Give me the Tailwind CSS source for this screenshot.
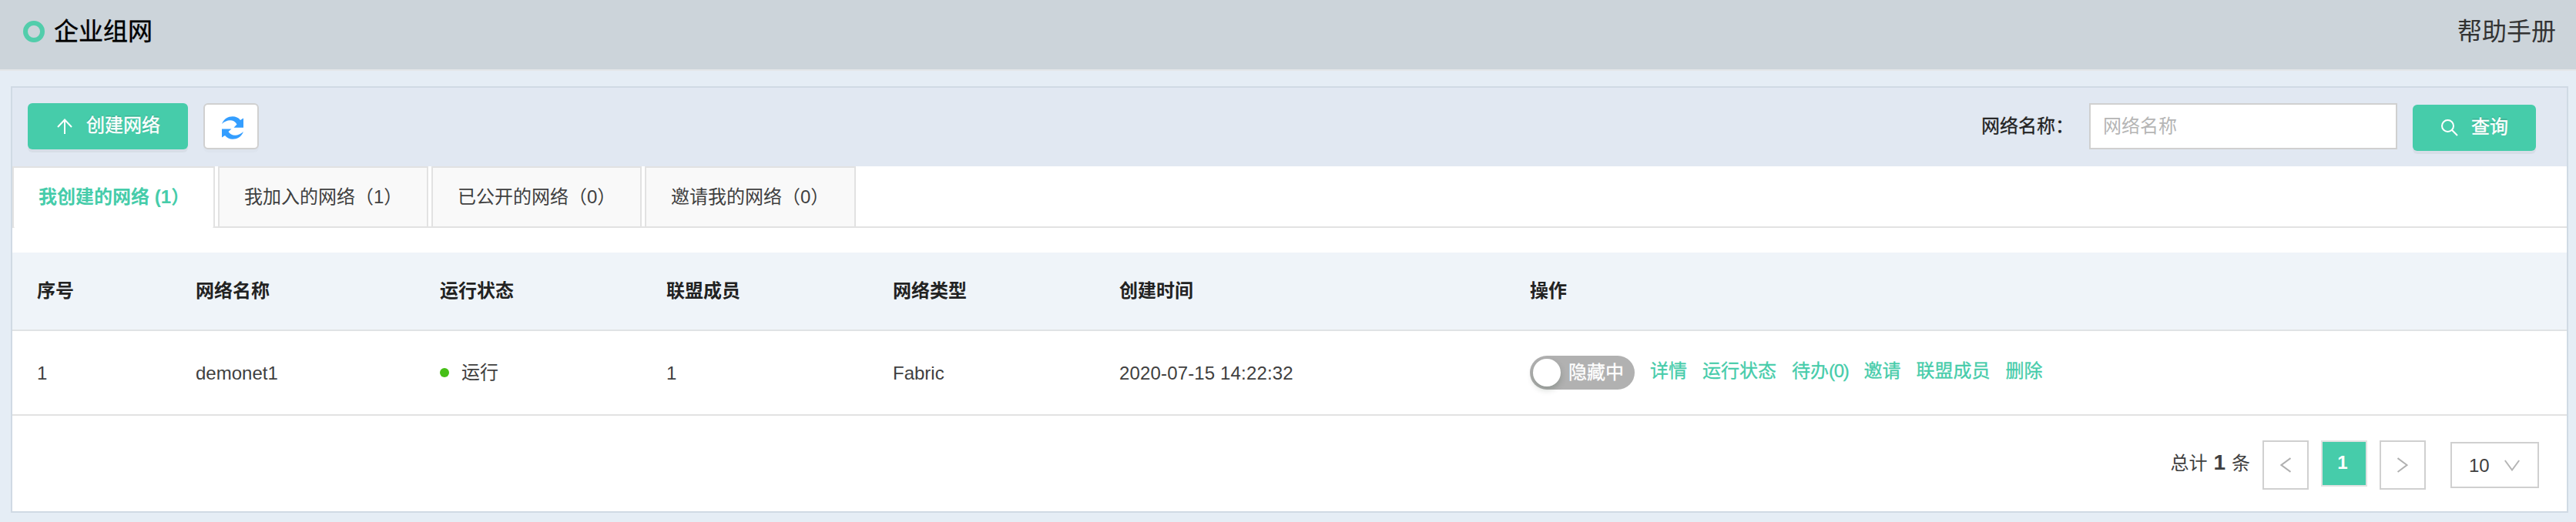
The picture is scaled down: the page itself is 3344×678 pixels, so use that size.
<!DOCTYPE html>
<html lang="zh-CN">
<head>
<meta charset="utf-8">
<title>企业组网</title>
<script src="https://cdn.jsdelivr.net/npm/@tailwindcss/browser@4"></script>
</head>
<body class="w-[3344px] h-[678px] overflow-hidden bg-[#e5edf5] font-['Liberation_Sans','Noto_Sans_CJK_SC',sans-serif] text-2xl leading-9 text-[#404040]">
<header class="flex h-[92px] items-start justify-between border-b-2 border-[#e4e6e8] bg-[#ccd4da] pl-[30px] pr-[26px] text-[32px] leading-[48px]">
  <div class="flex items-center gap-3 pt-4 text-black">
    <span class="size-7 rounded-full border-[6px] border-[#52cdab]"></span>
    <h1 class="pt-px [-webkit-text-stroke:0.4px_currentColor]">企业组网</h1>
  </div>
  <a class="pt-[17px] text-[#333]">帮助手册</a>
</header>

<main class="ml-[14px] mt-5 h-[554px] w-[3320px] border-2 border-[#d0dae4] bg-white">
  <div class="flex h-[102px] items-start justify-between bg-[#e1e8f2] pl-5 pr-10 pt-5">
    <div class="flex gap-5">
      <button class="flex h-[60px] w-[208px] items-center rounded-md bg-[#46ccaa] pl-[38px] text-white shadow-[0_4px_0_rgba(0,0,0,0.045)] [text-shadow:0_-2px_0_rgba(0,0,0,0.12)]">
        <svg class="mr-[18px] h-5 w-5" viewBox="0 0 20 20" fill="none" stroke="currentColor" stroke-width="2"><path d="M10 20V2M1 11L10 1.5L19 11"/></svg>
        <span class="-mt-0.5 [-webkit-text-stroke:0.4px_currentColor]">创建网络</span>
      </button>
      <button class="flex h-[60px] w-[72px] items-center justify-center rounded-md border-2 border-[#d0d0d0] bg-white pl-1 pt-[3px] shadow-[0_4px_0_rgba(0,0,0,0.015)]">
        <svg class="h-[30px] w-7" viewBox="0 0 28 30" fill="#349eff"><path d="M0 10C3 3 8 .3 14 .3C18 .3 21.500 1.800 24 5L28 2.500V14.800H15.500L19.500 10.500C16 4 7 3.500 0 10Z"/><path d="M28 20C25 27 20 29.700 14 29.700C10 29.700 6.500 28.200 4 25L0 27.500V16.500H12.500L8.500 20C12 26 21 26.500 28 20Z"/></svg>
      </button>
    </div>
    <div class="flex items-start">
      <label class="mt-3 flex w-[140px] text-[#222] [-webkit-text-stroke:0.3px_currentColor]">网络名称<span>：</span></label>
      <div class="h-[60px] w-[400px] border-2 border-[#d0d0d0] bg-white pl-4 pt-2.5 text-[#b5b5b5]">网络名称</div>
      <button class="ml-5 mt-0.5 flex h-[60px] w-40 items-center rounded-md bg-[#46ccaa] pl-[37px] text-white shadow-[0_4px_0_rgba(0,0,0,0.045)] [text-shadow:0_-2px_0_rgba(0,0,0,0.12)]">
        <svg class="mr-[17px] h-[22px] w-[22px]" viewBox="0 0 22 22" fill="none" stroke="currentColor" stroke-width="2"><circle cx="8.500" cy="8.500" r="7.500"/><path d="M13.800 13.800L21 21"/></svg>
        <span class="-mt-0.5 [-webkit-text-stroke:0.4px_currentColor]">查询</span>
      </button>
    </div>
  </div>

  <nav class="flex h-20 gap-1 border-b-2 border-[#e2e2e2] leading-9">
    <a class="h-20 w-[263px] whitespace-nowrap rounded-b-[3px] border-x-2 border-t-2 border-[#e2e2e2] bg-white pl-8 pt-5 font-bold text-[#46ccaa]">我创建的网络 (1）</a>
    <a class="w-[273px] whitespace-nowrap border-x-2 border-t-2 border-[#e2e2e2] bg-[#f9f9f9] pl-8 pt-5">我加入的网络（1）</a>
    <a class="w-[273px] whitespace-nowrap border-x-2 border-t-2 border-[#e2e2e2] bg-[#f9f9f9] pl-8 pt-5">已公开的网络（0）</a>
    <a class="w-[274px] whitespace-nowrap border-x-2 border-t-2 border-[#e2e2e2] bg-[#f9f9f9] pl-8 pt-5">邀请我的网络（0）</a>
  </nav>

  <section class="mt-8">
    <div class="grid h-[102px] grid-cols-[206px_317px_294px_294px_294px_533px_1fr] items-center border-b-2 border-[#e0e3e5] bg-[#eff4f9] pl-8 font-bold text-[#222]">
      <span>序号</span><span>网络名称</span><span>运行状态</span><span>联盟成员</span><span>网络类型</span><span>创建时间</span><span>操作</span>
    </div>
    <div class="grid h-[110px] grid-cols-[206px_317px_294px_294px_294px_533px_1fr] items-center border-b-2 border-[#e2e2e2] pl-8">
      <span class="pt-0.5">1</span>
      <span class="pt-0.5">demonet1</span>
      <span class="flex items-center gap-4"><i class="size-3 rounded-full bg-[#46bf17]"></i>运行</span>
      <span class="pt-0.5">1</span>
      <span class="pt-0.5">Fabric</span>
      <span class="pt-0.5 tracking-[0.15px]">2020-07-15 14:22:32</span>
      <div class="flex items-center">
        <div class="mr-5 flex h-11 w-[136px] items-center rounded-full bg-[#b1b1b1] pl-1 text-white">
          <span class="mr-2.5 size-9 rounded-full bg-white shadow-[0_4px_8px_rgba(0,35,11,0.2)]"></span>
          <span class="[-webkit-text-stroke:0.3px_currentColor]">隐藏中</span>
        </div>
        <div class="-mt-1 flex gap-5 text-[#46ccaa] [-webkit-text-stroke:0.3px_currentColor]">
          <a>详情</a><a>运行状态</a><a>待办<span class="tracking-[-1.3px]">(0)</span></a><a>邀请</a><a>联盟成员</a><a>删除</a>
        </div>
      </div>
    </div>
  </section>

  <footer class="flex items-start justify-end pr-9 pt-8">
    <div class="mr-4 mt-[11px] flex items-baseline gap-2"><span>总计</span><b class="text-[28px] leading-9">1</b><span>条</span></div>
    <button class="mr-4 flex h-16 w-[60px] items-center justify-center border-2 border-[#d0d0d0] text-[#b0b0b0]">
      <svg class="h-5 w-[14px]" viewBox="0 0 14 20" fill="none" stroke="currentColor" stroke-width="2"><path d="M13.500 1L1.500 10L13.500 19"/></svg>
    </button>
    <button class="mr-4 h-[60px] w-[60px] border-2 border-[#e2e2e2] bg-[#46ccaa] pb-0.5 pr-1 font-bold leading-[54px] text-white">1</button>
    <button class="mr-8 flex h-16 w-[60px] items-center justify-center border-2 border-[#d0d0d0] text-[#b0b0b0]">
      <svg class="h-5 w-[14px]" viewBox="0 0 14 20" fill="none" stroke="currentColor" stroke-width="2"><path d="M.5 1L12.500 10L.5 19"/></svg>
    </button>
    <button class="mt-0.5 flex h-[60px] w-[115px] items-center border-2 border-[#d0d0d0] pl-[22px]">
      <span class="pt-0.5">10</span>
      <svg class="ml-[19px] h-[15px] w-5 text-[#b5b5b5]" viewBox="0 0 20 15" fill="none" stroke="currentColor" stroke-width="2"><path d="M.8 1L10 13.500L19.200 1"/></svg>
    </button>
  </footer>
</main>
</body>
</html>
